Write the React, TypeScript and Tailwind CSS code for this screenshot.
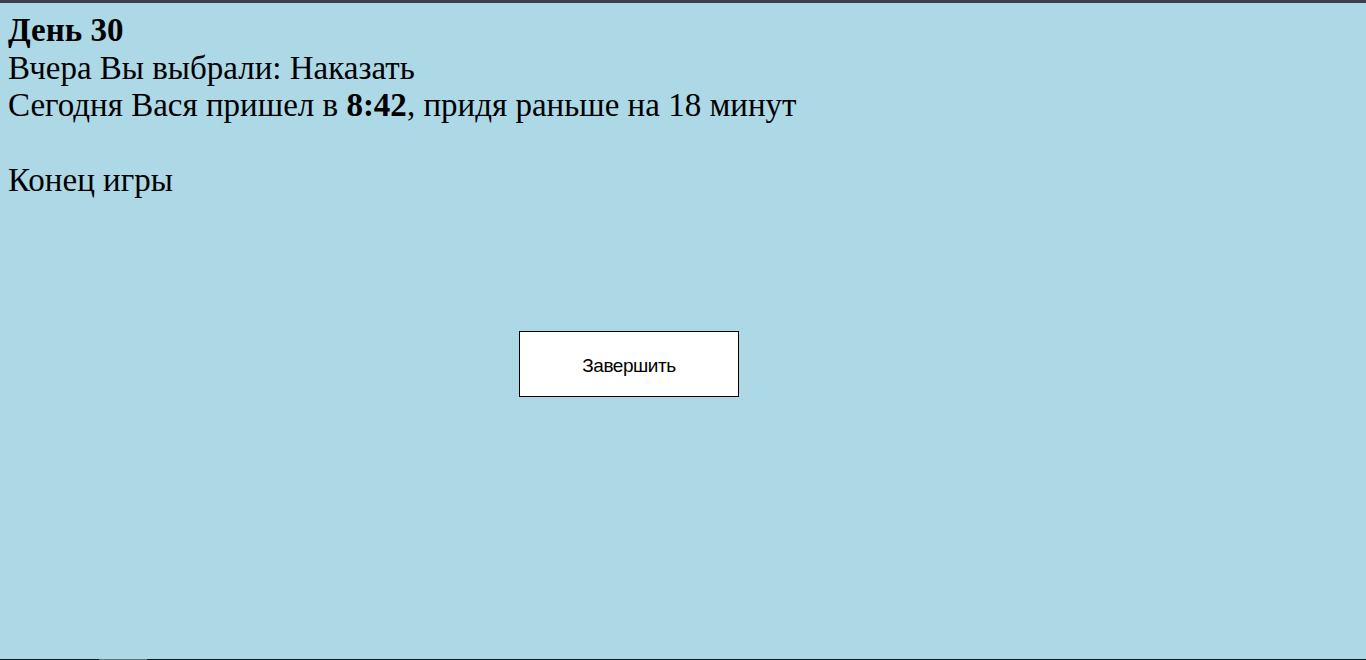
export default function App() {
  return (
    <div className="flex h-[660px] w-full flex-col overflow-hidden">
      <div className="h-[3px] w-full bg-[#3d404b]" />
      <div className="flex-1 bg-[#add8e6] px-2 pt-[9px]">
        <div
          className="text-[33px] leading-[37.5px] text-black"
          style={{ fontFamily: '"Liberation Serif", "Times New Roman", serif' }}
        >
          <div className="font-bold">День 30</div>
          <div>Вчера Вы выбрали: Наказать</div>
          <div>
            Сегодня Вася пришел в <b>8:42</b>, придя раньше на 18 минут
          </div>
          <div>&nbsp;</div>
          <div>Конец игры</div>
        </div>
        <button
          className="ml-[511px] mt-[131px] flex h-[66px] w-[220px] items-center justify-center border border-black bg-white pt-[5px] text-[19px] tracking-[-0.45px] text-black"
          style={{ fontFamily: '"Liberation Sans", Arial, sans-serif' }}
        >
          Завершить
        </button>
      </div>
      <div className="flex h-px w-full bg-[#0b1a20]">
        <div className="w-[99px]" />
        <div className="w-[48px] bg-[#5f7479]" />
      </div>
    </div>
  );
}
